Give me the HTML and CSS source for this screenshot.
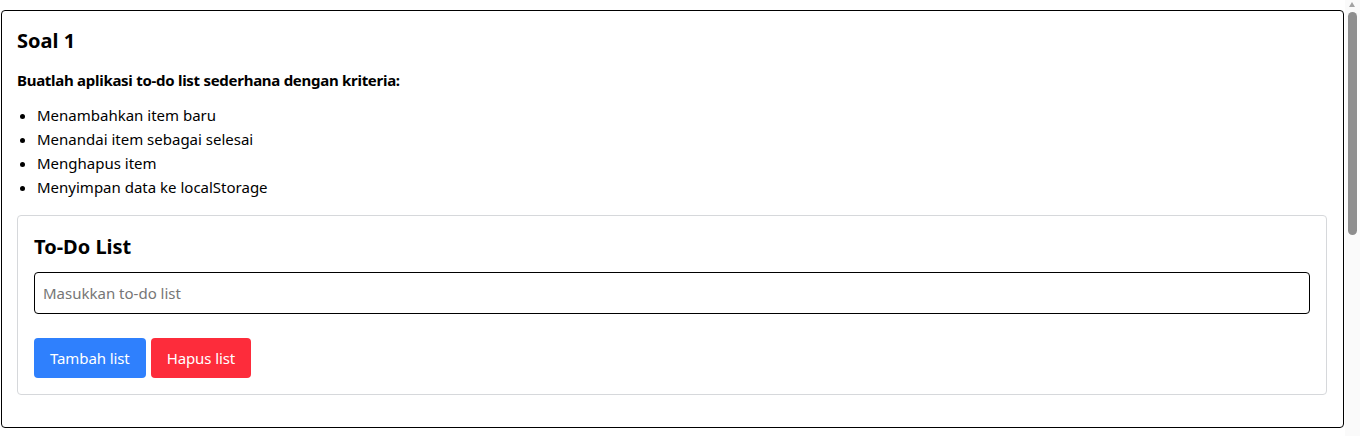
FILE: index.html
```html
<!DOCTYPE html>
<html lang="id">
<head>
<meta charset="utf-8">
<title>Soal 1</title>
<link rel="stylesheet" href="styles.css">
</head>
<body>
  <section class="soal">
    <h2 class="soal-title">Soal 1</h2>
    <p class="soal-desc">Buatlah aplikasi to-do list sederhana dengan kriteria:</p>
    <ul class="soal-list">
      <li>Menambahkan item baru</li>
      <li>Menandai item sebagai selesai</li>
      <li>Menghapus item</li>
      <li>Menyimpan data ke localStorage</li>
    </ul>
    <div class="todo-card">
      <h3 class="todo-title">To-Do List</h3>
      <input class="todo-input" type="text" placeholder="Masukkan to-do list">
      <div class="todo-actions">
        <button class="btn btn-primary" type="button">Tambah list</button>
        <button class="btn btn-danger" type="button">Hapus list</button>
      </div>
    </div>
  </section>
  <div class="page-rest"></div>
  <div class="scrollbar" aria-hidden="true">
    <span class="scrollbar-arrow"></span>
    <span class="scrollbar-thumb"></span>
  </div>
</body>
</html>
```

FILE: styles.css
```css
* { box-sizing: border-box; }

html, body {
  margin: 0;
  padding: 0;
}

html::-webkit-scrollbar { display: none; }

body {
  font-family: "Noto Sans", "Open Sans", sans-serif;
  font-size: 16px;
  line-height: 24px;
  color: #000;
  background: #fff;
}

.soal {
  margin: 10px 16px 0 1px;
  border: 1px solid #000;
  border-radius: 4px;
  padding: 15px 16px 16px 15px;
}

.soal-title {
  margin: 0 0 12px;
  font-size: 20px;
  line-height: 30px;
  font-weight: 700;
}

.soal-desc {
  margin: 0 0 11px;
  font-size: 15px;
  font-weight: 700;
  letter-spacing: -0.28px;
}

.soal-list {
  margin: 0 0 16px;
  padding-left: 20px;
  font-size: 15px;
}

.todo-card {
  border: 1px solid #d6d8db;
  border-radius: 4px;
  padding: 16px;
  margin-bottom: 16px;
}

.todo-title {
  margin: 0 0 10px;
  font-size: 20px;
  line-height: 30px;
  font-weight: 700;
}

.todo-input {
  display: block;
  width: 100%;
  height: 42px;
  border: 1px solid #000;
  border-radius: 4px;
  padding: 6px 8px;
  font-family: inherit;
  font-size: 15px;
  color: #000;
  outline: none;
}

.todo-input::placeholder {
  color: #767676;
}

.todo-actions {
  display: flex;
  gap: 5px;
  margin-top: 24px;
}

.btn {
  height: 40px;
  border: none;
  border-radius: 4px;
  padding: 0 16px;
  font-family: inherit;
  font-size: 15px;
  letter-spacing: -0.1px;
  color: #fff;
  cursor: pointer;
}

.btn-primary { background: #2f80fd; }
.btn-danger { background: #fd2c3b; }

.page-rest {
  height: 378px;
}

/* classic scrollbar drawn over the right edge */
.scrollbar {
  position: fixed;
  top: 0;
  right: 0;
  width: 15px;
  height: 100vh;
  background: #fafafa;
}

.scrollbar-arrow {
  position: absolute;
  top: 2px;
  left: 4px;
  width: 0;
  height: 0;
  border-left: 3.5px solid transparent;
  border-right: 3.5px solid transparent;
  border-bottom: 5px solid #a3a3a3;
}

.scrollbar-thumb {
  position: absolute;
  top: 12px;
  left: 3px;
  width: 9px;
  height: 223px;
  border-radius: 5px;
  background: #8e8e8e;
}
```
